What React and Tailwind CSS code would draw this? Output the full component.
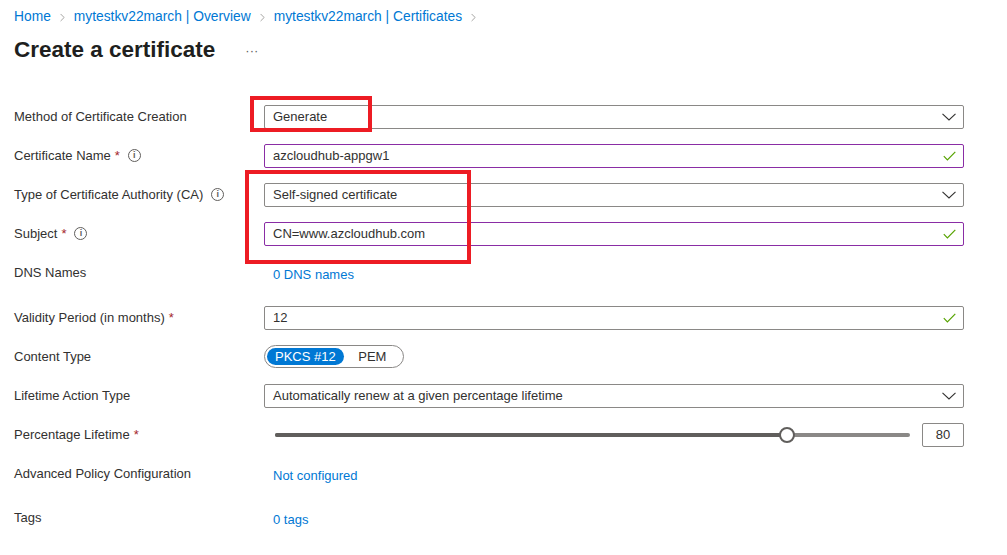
import React from "react";
import { ChevronRight } from "lucide-react";

const Req = () => <span className="ml-1 text-[#a4262c]">*</span>;

const Tip = () => (
  <span className="ml-2 inline-flex h-[13px] w-[13px] items-center justify-center rounded-full border border-[#605e5c] text-[9px] font-semibold leading-none text-[#605e5c]">
    i
  </span>
);

const Row = ({ label, h = "h-[39px]", children }) => (
  <div className={`flex ${h} items-center`}>
    <div className="flex w-[250px] items-center text-[13px] text-[#323130]">{label}</div>
    <div className="flex-1">{children}</div>
  </div>
);

const Caret = () => (
  <svg width="14" height="8" viewBox="0 0 14 8" fill="none">
    <path d="M0.5 0.8 L7 7 L13.5 0.8" stroke="#323130" strokeWidth="1.1" />
  </svg>
);

const Tick = () => (
  <svg width="13" height="10" viewBox="0 0 13 10" fill="none">
    <path d="M0.8 5.2 L4.4 8.8 L12.3 0.8" stroke="#57a300" strokeWidth="1.2" />
  </svg>
);

const Dropdown = ({ value }) => (
  <div className="flex h-[24px] w-[700px] items-center justify-between rounded-[2px] border border-[#8a8886] bg-white pl-[8px] pr-[7px] text-[13px] text-[#323130]">
    <span>{value}</span>
    <Caret />
  </div>
);

const TextBox = ({ value, purple }) => (
  <div
    className={`flex h-[24px] w-[700px] items-center justify-between rounded-[2px] border bg-white pl-[8px] pr-[7px] text-[13px] text-[#323130] ${
      purple ? "border-[#8a2da5]" : "border-[#8a8886]"
    }`}
  >
    <span>{value}</span>
    <Tick />
  </div>
);

const Link = ({ children }) => (
  <span className="ml-[9px] inline-block pt-[6px] text-[13px] text-[#0078d4]">{children}</span>
);

export default function App() {
  const crumbs = ["Home", "mytestkv22march | Overview", "mytestkv22march | Certificates"];
  return (
    <div
      className="relative min-h-[555px] w-[1007px] bg-white px-[14px]"
      style={{ fontFamily: '"Liberation Sans", Arial, sans-serif' }}
    >
      {/* breadcrumb */}
      <div className="flex h-[33px] items-center pt-[1px] text-[13.8px] text-[#0078d4]">
        {crumbs.map((c) => (
          <React.Fragment key={c}>
            <span>{c}</span>
            <ChevronRight className="mx-[5px] h-[13px] w-[13px] text-[#8a8886]" strokeWidth={1.4} />
          </React.Fragment>
        ))}
      </div>

      {/* title */}
      <div className="flex h-[34px] items-center">
        <h1 className="text-[22.5px] font-semibold text-[#201f1e]">Create a certificate</h1>
        <span className="ml-[30px] text-[13px] leading-none text-[#605e5c]">···</span>
      </div>

      <div className="mt-[30px]">
        <Row label="Method of Certificate Creation">
          <Dropdown value="Generate" />
        </Row>
        <Row label={<>Certificate Name<Req /><Tip /></>}>
          <TextBox value="azcloudhub-appgw1" purple />
        </Row>
        <Row label={<>Type of Certificate Authority (CA)<Tip /></>}>
          <Dropdown value="Self-signed certificate" />
        </Row>
        <Row label={<>Subject<Req /><Tip /></>}>
          <TextBox value="CN=www.azcloudhub.com" purple />
        </Row>
        <div className="mb-[6px]">
          <Row label="DNS Names">
            <Link>0 DNS names</Link>
          </Row>
        </div>
        <Row label={<>Validity Period (in months)<Req /></>}>
          <TextBox value="12" />
        </Row>
        <Row label="Content Type">
          <div className="flex h-[23px] w-[140px] items-center rounded-full border border-[#8a8886] p-[2px]">
            <span className="flex h-[17px] items-center rounded-full bg-[#0078d4] px-[8px] text-[13px] text-white">
              PKCS #12
            </span>
            <span className="flex-1 text-center text-[13px] text-[#323130]">PEM</span>
          </div>
        </Row>
        <Row label="Lifetime Action Type">
          <Dropdown value="Automatically renew at a given percentage lifetime" />
        </Row>
        <Row label={<>Percentage Lifetime<Req /></>}>
          <div className="flex w-[700px] items-center">
            <div className="relative ml-[11px] flex h-[4px] w-[635px] items-center rounded-full bg-[#8a8886]">
              <div className="h-[4px] w-[512px] rounded-full bg-[#605e5c]" />
              <div className="absolute left-[504px] h-[16px] w-[16px] rounded-full border-2 border-[#605e5c] bg-white" />
            </div>
            <div className="ml-auto flex h-[24px] w-[42px] items-center justify-center rounded-[2px] border border-[#8a8886] text-[13px] text-[#323130]">
              80
            </div>
          </div>
        </Row>
        <div className="mb-[5px]">
          <Row label="Advanced Policy Configuration">
            <Link>Not configured</Link>
          </Row>
        </div>
        <Row label="Tags">
          <Link>0 tags</Link>
        </Row>
      </div>

      {/* annotation boxes */}
      <div className="absolute left-[250px] top-[96px] h-[36px] w-[122px] border-4 border-[#ed1c24]" />
      <div className="absolute left-[245px] top-[170px] h-[94px] w-[226px] border-4 border-[#ed1c24]" />
    </div>
  );
}
